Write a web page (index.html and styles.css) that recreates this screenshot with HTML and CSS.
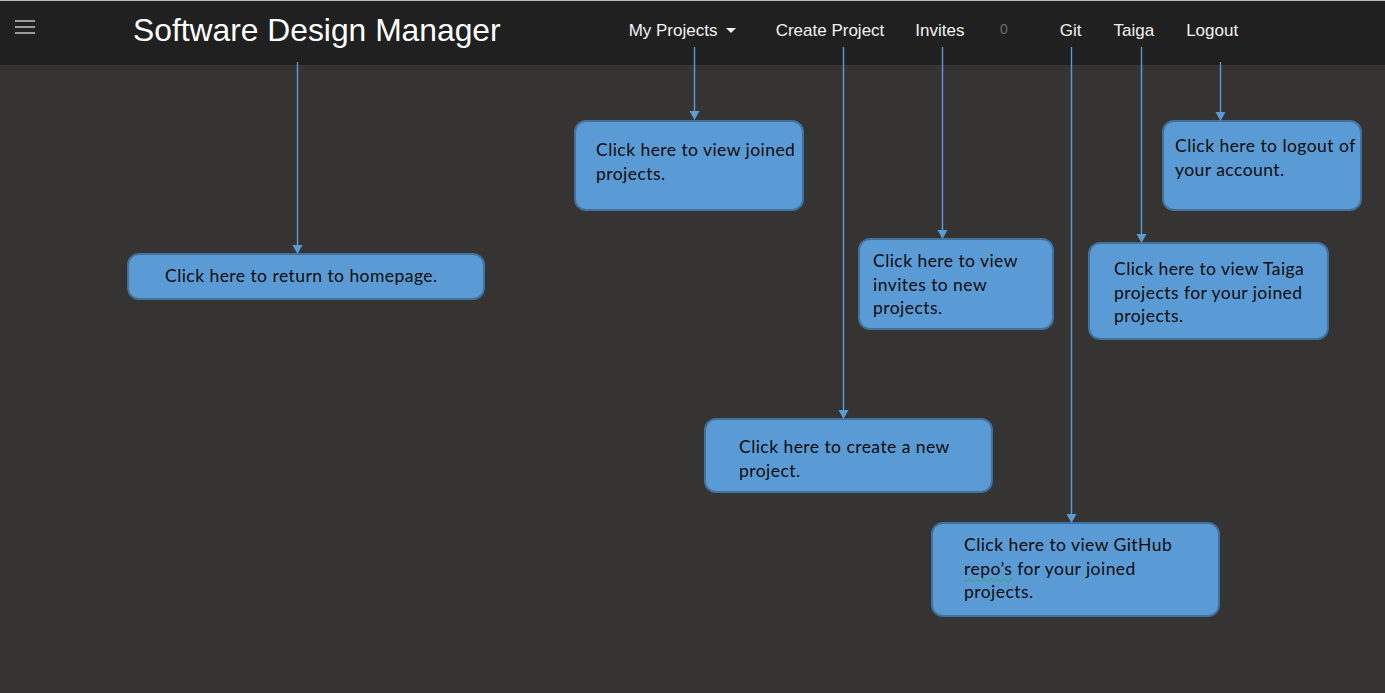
FILE: index.html
```html
<!DOCTYPE html>
<html lang="en">
<head>
<meta charset="utf-8">
<title>Software Design Manager</title>
<link rel="stylesheet" href="styles.css">
</head>
<body>
<header class="navbar">
  <button class="menu-btn" aria-label="Menu"><span></span><span></span><span></span></button>
  <a class="brand" href="#">Software Design Manager</a>
  <nav class="nav">
    <a class="nav-link dropdown" href="#">My Projects <span class="caret"></span></a>
    <a class="nav-link" href="#">Create Project</a>
    <a class="nav-link" href="#">Invites</a>
    <span class="badge">0</span>
    <a class="nav-link wide" href="#">Git</a>
    <a class="nav-link wide" href="#">Taiga</a>
    <a class="nav-link wide" href="#">Logout</a>
  </nav>
</header>

<main class="canvas">
  <svg class="connectors" width="1385" height="693" viewBox="0 0 1385 693">
    <g stroke="#5b9bd5" stroke-width="1.4" fill="none">
      <line x1="297.5" y1="62" x2="297.5" y2="246"/>
      <line x1="694.5" y1="47" x2="694.5" y2="112"/>
      <line x1="843.5" y1="47" x2="843.5" y2="411"/>
      <line x1="942.5" y1="47" x2="942.5" y2="231"/>
      <line x1="1071.5" y1="47" x2="1071.5" y2="515"/>
      <line x1="1141.5" y1="47" x2="1141.5" y2="235"/>
      <line x1="1220.5" y1="62" x2="1220.5" y2="113"/>
    </g>
    <g fill="#5b9bd5">
      <polygon points="292.5,245 302.5,245 297.5,254"/>
      <polygon points="689.5,111 699.5,111 694.5,120"/>
      <polygon points="838.5,410 848.5,410 843.5,419"/>
      <polygon points="937.5,230 947.5,230 942.5,239"/>
      <polygon points="1066.5,514 1076.5,514 1071.5,523"/>
      <polygon points="1136.5,234 1146.5,234 1141.5,243"/>
      <polygon points="1215.5,112 1225.5,112 1220.5,121"/>
    </g>
  </svg>

  <div class="callout c-home">Click here to return to homepage.</div>
  <div class="callout c-joined">Click here to view joined<br>projects.</div>
  <div class="callout c-create">Click here to create a new<br>project.</div>
  <div class="callout c-invites">Click here to view<br>invites to new<br>projects.</div>
  <div class="callout c-git">Click here to view GitHub<br><span class="spell">repo’s</span> for your joined<br>projects.</div>
  <div class="callout c-taiga">Click here to view Taiga<br>projects for your joined<br>projects.</div>
  <div class="callout c-logout">Click here to logout of<br>your account.</div>
</main>
</body>
</html>
```

FILE: styles.css
```css
* { box-sizing: border-box; }

html, body {
  margin: 0;
  padding: 0;
}

body {
  width: 1385px;
  height: 693px;
  background: #363433;
  font-family: "Liberation Sans", Arial, sans-serif;
  overflow: hidden;
  position: relative;
}

.navbar {
  height: 65px;
  background: #202020;
  border-top: 1px solid #b8b8b8;
  display: flex;
  align-items: center;
}

.menu-btn {
  margin-left: 15px;
  width: 20px;
  height: 14px;
  padding: 0;
  border: 0;
  background: transparent;
  display: flex;
  flex-direction: column;
  justify-content: space-between;
  align-self: flex-start;
  margin-top: 19px;
}

.menu-btn span {
  display: block;
  height: 2px;
  background: #9a9a9a;
}

.brand {
  margin-left: 98px;
  margin-top: -5px;
  color: #ffffff;
  text-decoration: none;
  font-size: 31.8px;
  white-space: nowrap;
}

.nav {
  display: flex;
  align-items: center;
  margin-left: 112px;
  margin-top: -4px;
}

.nav-link {
  color: #f2f2f2;
  text-decoration: none;
  font-size: 17px;
  padding: 0 15.5px;
  white-space: nowrap;
}

.nav-link.wide {
  padding: 0 16px;
}

.nav-link.dropdown {
  padding-left: 16px;
  padding-right: 24px;
}

.caret {
  display: inline-block;
  width: 0;
  height: 0;
  margin-left: 4px;
  vertical-align: 3px;
  border-left: 5px solid transparent;
  border-right: 5px solid transparent;
  border-top: 5px solid #f2f2f2;
}

.badge {
  color: #6e6e6e;
  font-size: 14px;
  margin: -4px 36px 0 20px;
}

.canvas {
  position: relative;
  height: 628px;
}

.connectors {
  position: absolute;
  left: 0;
  top: -65px;
  pointer-events: none;
  z-index: 2;
}

.callout {
  position: absolute;
  background: #5b9bd5;
  border: 2px solid #41719c;
  border-radius: 12px;
  color: #0b0b0b;
  font-family: Lato, "Open Sans", sans-serif;
  font-size: 17.5px;
  letter-spacing: 0.45px;
  line-height: 23.5px;
  white-space: nowrap;
  z-index: 1;
}

.spell {
  text-decoration: underline wavy #3aa33a;
  text-decoration-thickness: 1px;
  text-underline-offset: 3px;
}

.c-home    { left: 127px;  top: 188px; width: 358px; height: 47px; padding: 9px 0 0 36px; }
.c-joined  { left: 574px;  top: 55px;  width: 230px; height: 91px; padding: 16px 0 0 20px; }
.c-create  { left: 704px;  top: 353px; width: 289px; height: 75px; padding: 15px 0 0 33px; }
.c-invites { left: 858px;  top: 173px; width: 196px; height: 92px; padding: 9px 0 0 13px; }
.c-git     { left: 931px;  top: 457px; width: 289px; height: 95px; padding: 9px 0 0 31px; }
.c-taiga   { left: 1088px; top: 177px; width: 241px; height: 98px; padding: 13px 0 0 24px; }
.c-logout  { left: 1162px; top: 55px;  width: 200px; height: 91px; padding: 12px 0 0 11px; }
```
